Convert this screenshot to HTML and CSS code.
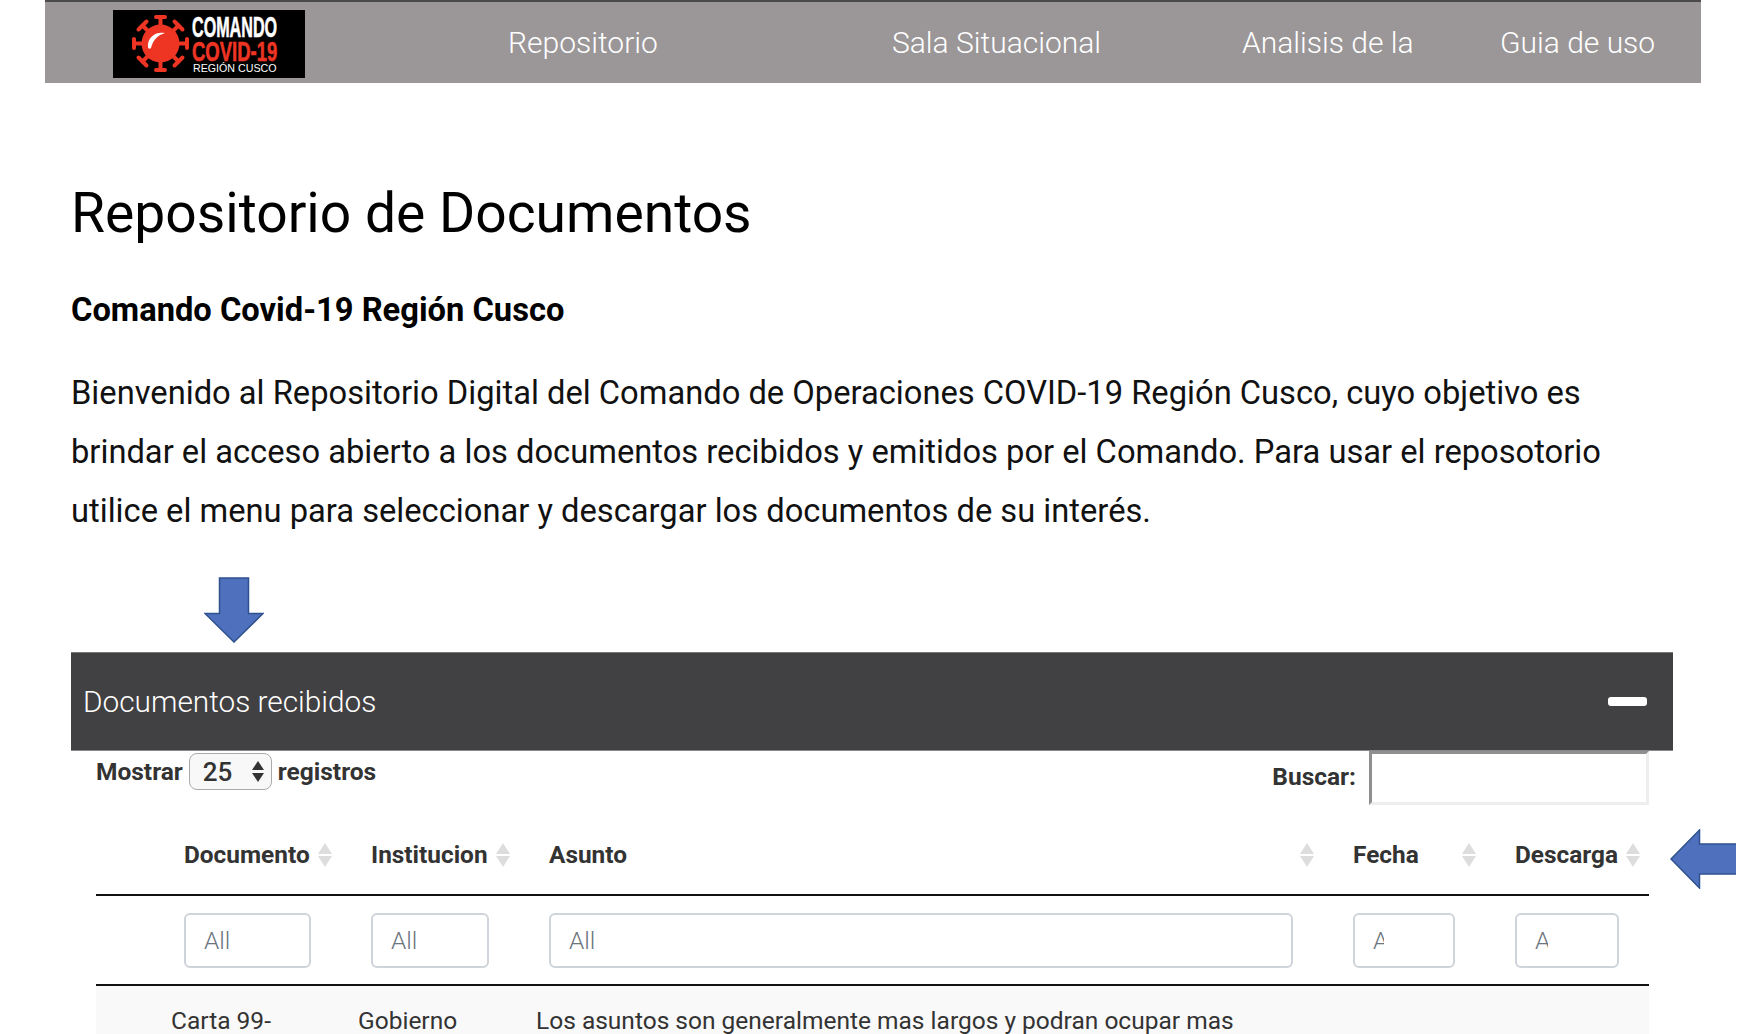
FILE: index.html
```html
<!DOCTYPE html>
<html lang="es">
<head>
<meta charset="utf-8">
<title>Repositorio de Documentos</title>
<link rel="stylesheet" href="styles.css">
</head>
<body>
<nav class="nav">
  <svg class="logo" viewBox="0 0 192 68" width="192" height="68" role="img" aria-label="Comando COVID-19 Región Cusco">
    <rect width="192" height="68" fill="#000"/>
    <g stroke="#ee3524" fill="none" stroke-linecap="round">
      <path stroke-width="4" d="M47.500 33.500V8M47.500 33.500V59M47.500 33.500H22M47.500 33.500H73M47.500 33.500L29.500 15.500M47.500 33.500L65.500 15.500M47.500 33.500L29.500 51.500M47.500 33.500L65.500 51.500"/>
      <path stroke-width="4" d="M43 7H52M43 60H52M21 29V38M74 29V38M25.500 19.500L33.500 11.500M61.500 11.500L69.500 19.500M25.500 47.500L33.500 55.500M61.500 55.500L69.500 47.500"/>
    </g>
    <circle cx="47.500" cy="33.500" r="19" fill="#ee3524"/>
    <path d="M35 37C34 28 42 21 52 23C45 25 40 30 38 38C37 39 35 39 35 37Z" fill="#fff"/>
    <g transform="translate(79 27) scale(.556 1)"><text class="logo-a">COMANDO</text></g>
    <g transform="translate(79 51) scale(.66 1)"><text class="logo-b">COVID-19</text></g>
    <g transform="translate(80 62) scale(.97 1)"><text class="logo-c">REGIÓN CUSCO</text></g>
  </svg>
  <div class="nav-links">
    <a class="nav-link">Repositorio</a>
    <a class="nav-link">Sala Situacional</a>
    <a class="nav-link">Analisis de la</a>
    <a class="nav-link">Guia de uso</a>
  </div>
</nav>

<main class="page">
  <h1 class="title">Repositorio de Documentos</h1>
  <h2 class="subtitle">Comando Covid-19 Región Cusco</h2>
  <p class="intro">Bienvenido al Repositorio Digital del Comando de Operaciones COVID-19 Región Cusco, cuyo objetivo es brindar el acceso abierto a los documentos recibidos y emitidos por el Comando. Para usar el reposotorio utilice el menu para seleccionar y descargar los documentos de su interés.</p>

  <svg class="arrow-down" viewBox="0 0 60 66" width="60" height="66" aria-hidden="true">
    <path d="M15.500 1H44.500V36.500H59L30 65L1 36.500H15.500Z" fill="#4f71bd" stroke="#2f528f" stroke-width="1.5"/>
  </svg>

  <section class="panel">
    <header class="panel-head">
      <span class="panel-title">Documentos recibidos</span>
      <span class="panel-minus"></span>
    </header>
    <div class="panel-body">
      <div class="controls">
        <label class="length">Mostrar
          <span class="select-wrap">
            <select class="select"><option>25</option></select>
            <span class="select-arrows"></span>
          </span>
          registros</label>
        <label class="search">Buscar: <input class="search-input" type="text"></label>
      </div>
      <table class="table">
        <colgroup>
          <col class="c1"><col class="c2"><col class="c3"><col class="c4"><col class="c5">
        </colgroup>
        <thead>
          <tr class="head-row">
            <th class="th"><span class="th-in">Documento<i class="sort"></i></span></th>
            <th class="th"><span class="th-in">Institucion<i class="sort"></i></span></th>
            <th class="th"><span class="th-in">Asunto<i class="sort"></i></span></th>
            <th class="th"><span class="th-in">Fecha<i class="sort"></i></span></th>
            <th class="th"><span class="th-in">Descarga<i class="sort"></i></span></th>
          </tr>
          <tr class="filter-row">
            <td class="fc"><input class="filter" placeholder="All"></td>
            <td class="fc"><input class="filter" placeholder="All"></td>
            <td class="fc"><input class="filter" placeholder="All"></td>
            <td class="fc"><input class="filter narrow" placeholder="All"></td>
            <td class="fc"><input class="filter narrow" placeholder="All"></td>
          </tr>
        </thead>
        <tbody>
          <tr class="row">
            <td class="td">Carta 99-</td>
            <td class="td">Gobierno</td>
            <td class="td">Los asuntos son generalmente mas largos y podran ocupar mas</td>
            <td class="td"></td>
            <td class="td"></td>
          </tr>
        </tbody>
      </table>
      <svg class="arrow-left" viewBox="0 0 66 60" width="66" height="60" aria-hidden="true">
        <path d="M66 15H29.500V1L1 30L29.500 59V45H66" fill="#4f71bd" stroke="#2f528f" stroke-width="1.5"/>
      </svg>
    </div>
  </section>
</main>
</body>
</html>
```
FILE: styles.css
```css
html, body {
  margin: 0;
  height: 1034px;
  overflow: hidden;
  background: #fff;
}
body {
  font-family: Roboto, "Liberation Sans", sans-serif;
  color: #000;
}
.nav {
  display: flex;
  align-items: center;
  height: 81px;
  margin: 0 39px 0 45px;
  padding-left: 68px;
  background: #9b9798;
  border-top: 2px solid #4a4a4a;
}
.logo { flex: none; display: block; margin-top: 2px; }
.logo-a, .logo-b {
  font-family: "Liberation Sans", sans-serif;
  font-weight: 700;
  stroke-width: .6px;
}
.logo-a { font-size: 29px; fill: #fff; stroke: #fff; }
.logo-b { font-size: 28px; fill: #ee3524; stroke: #ee3524; }
.logo-c {
  font-family: "Liberation Sans", sans-serif;
  font-size: 11px;
  fill: #fff;
}
.nav-links {
  display: grid;
  grid-template-columns: 384px 350px 258px auto;
  margin-left: 203px;
}
.nav-link {
  color: #fff;
  font-size: 30px;
  font-weight: 300;
  white-space: nowrap;
}
.page { padding: 0 67px 0 71px; }
.title {
  margin: 98px 0 0;
  font-size: 55.200px;
  line-height: 64px;
  font-weight: 400;
}
.subtitle {
  margin: 46px 0 0;
  font-size: 32.700px;
  line-height: 38px;
  font-weight: 700;
}
.intro {
  margin: 35px 0 0;
  font-size: 32.700px;
  line-height: 58.800px;
  font-weight: 400;
  color: #111;
}
.arrow-down {
  display: block;
  margin: 37px 0 9px 133px;
}
.panel-head {
  display: flex;
  align-items: center;
  justify-content: space-between;
  height: 97px;
  padding: 0 26px 0 12px;
  background: #414042;
  border-top: 1px solid #777;
  border-bottom: 1px solid #888;
}
.panel-title {
  color: #fff;
  font-size: 29.800px;
  font-weight: 300;
}
.panel-minus {
  width: 39px;
  height: 9px;
  border-radius: 3px;
  background: #fff;
}
.panel-body {
  position: relative;
  padding: 0 24px 0 25px;
}
.controls {
  display: flex;
  justify-content: space-between;
  align-items: flex-start;
  height: 54px;
  color: #333;
  font-size: 24.500px;
  font-weight: 700;
}
.length {
  display: flex;
  align-items: center;
  gap: 6px;
  margin-top: 2px;
}
.select-wrap {
  position: relative;
  display: block;
}
.select {
  display: block;
  appearance: none;
  width: 83px;
  height: 37px;
  padding: 0 0 0 13px;
  border: 1.500px solid #aaa;
  border-radius: 8px;
  background: #f8f8f8;
  color: #333;
  font-family: inherit;
  font-size: 26px;
  font-weight: 500;
}
.select-arrows {
  position: absolute;
  right: 8px;
  top: 8px;
  width: 0;
  height: 0;
  border-left: 6px solid transparent;
  border-right: 6px solid transparent;
  border-bottom: 9px solid #333;
}
.select-arrows::after {
  content: "";
  position: absolute;
  left: -6px;
  top: 12px;
  border-left: 6px solid transparent;
  border-right: 6px solid transparent;
  border-top: 9px solid #333;
}
.search {
  display: flex;
  align-items: center;
  gap: 13px;
}
.search-input {
  box-sizing: border-box;
  width: 280px;
  height: 54px;
  margin: 0 0 -4px;
  padding: 0;
  border: 3px solid;
  border-color: #8f8f8f #eee #eee #8f8f8f;
  background: #fff;
}
.table {
  table-layout: fixed;
  width: 1553px;
  margin-top: 30px;
  border-collapse: collapse;
}
.c1 { width: 262px; }
.c2 { width: 178px; }
.c3 { width: 804px; }
.c4 { width: 162px; }
.c5 { width: 147px; }
.head-row { height: 60px; }
.th {
  padding: 0 26px 20px 13px;
  border-bottom: 2px solid #111;
  color: #333;
  font-size: 24.400px;
  font-weight: 700;
  text-align: left;
  vertical-align: middle;
}
.th:first-child { padding-left: 88px; }
.th:last-child { padding-right: 9px; }
.th-in {
  display: flex;
  align-items: center;
  justify-content: space-between;
}
.sort {
  position: relative;
  flex: none;
  width: 14px;
  height: 24px;
}
.sort::before,
.sort::after {
  content: "";
  position: absolute;
  left: 0;
  border-left: 7px solid transparent;
  border-right: 7px solid transparent;
}
.sort::before { top: 0; border-bottom: 11px solid #ddd; }
.sort::after { bottom: 0; border-top: 11px solid #ddd; }
.filter-row { height: 90px; }
.fc {
  padding: 0 47px 0 13px;
  border-bottom: 2px solid #111;
}
.fc:first-child { padding-left: 88px; }
.fc:last-child { padding-right: 30px; }
.filter {
  display: block;
  box-sizing: border-box;
  width: 100%;
  height: 55px;
  margin: 0;
  padding: 0 10px 0 18px;
  border: 2px solid #ced4da;
  border-radius: 6px;
  background: #fff;
  font-family: inherit;
  font-size: 24.500px;
  font-weight: 300;
}
.filter.narrow { padding-right: 69px; }
.filter::placeholder { color: #6c757d; opacity: 1; }
.row { background: #f9f9f9; }
.td {
  padding: 20px 0 20px;
  color: #333;
  font-size: 24.500px;
  font-weight: 400;
  vertical-align: top;
  white-space: nowrap;
}
.td:first-child { padding-left: 75px; }
.arrow-left {
  position: absolute;
  left: 1599px;
  top: 78px;
}
```
